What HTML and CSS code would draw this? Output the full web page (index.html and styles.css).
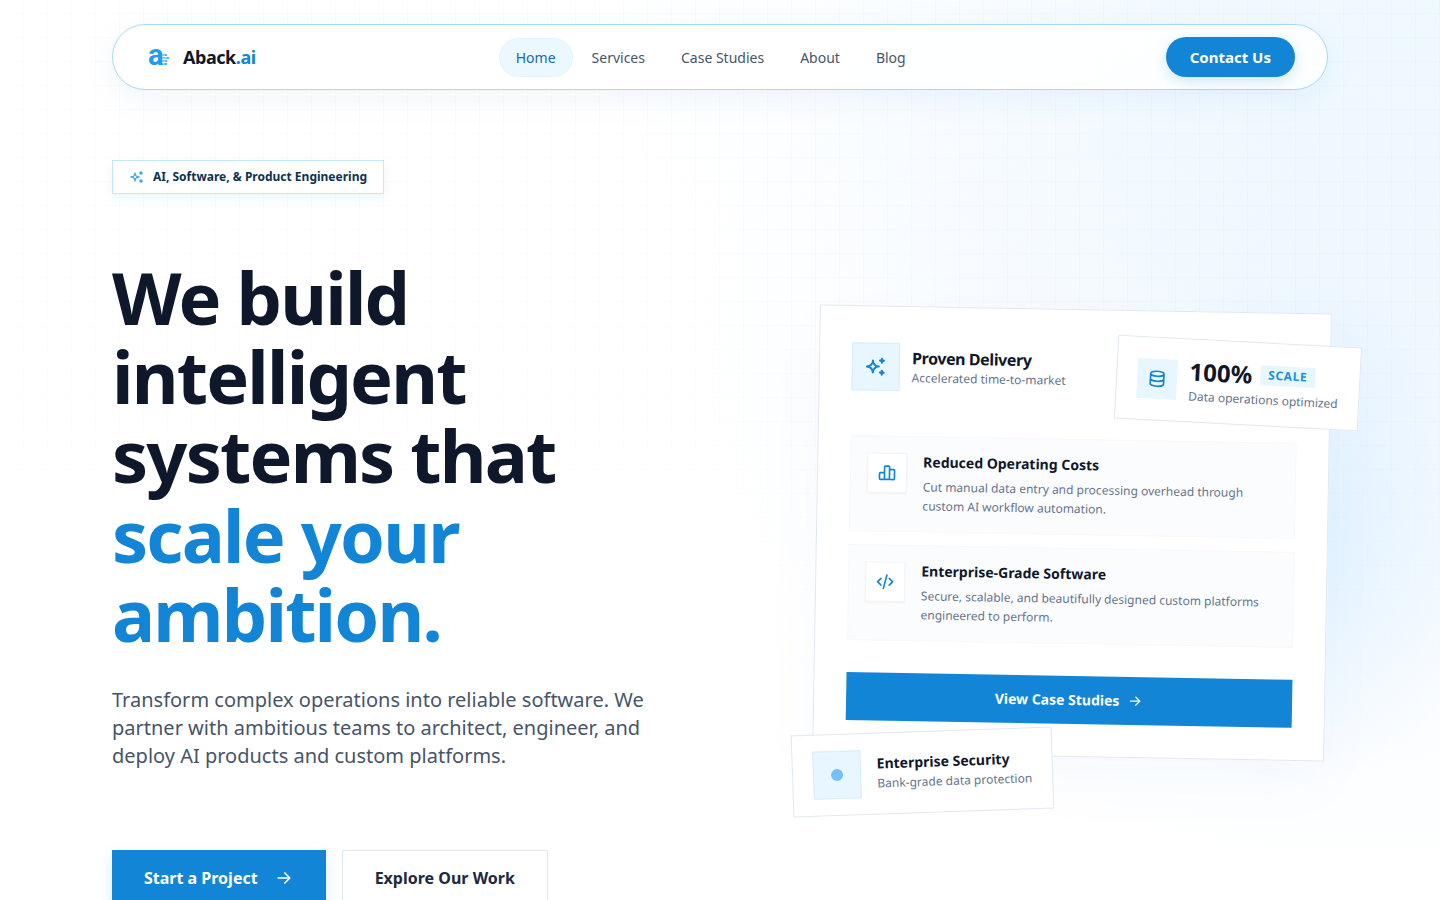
FILE: index.html
```
<!DOCTYPE html>
<html lang="en">
<head>
    <meta charset="UTF-8">
    <meta name="viewport" content="width=device-width, initial-scale=1.0">
    <title>Aback.ai</title>
    <link rel="stylesheet" href="styles.css">
</head>
<body>
    <div class="page">
        <div class="page-grid"></div>

        <header class="navbar">
            <a class="brand" href="#">
                <svg class="brand-mark" viewBox="0 0 28 28" aria-hidden="true">
                    <text x="3" y="22">a</text>
                    <path d="M16 12h4M16 15h6M16 18h4M16 21h5"/>
                    <circle cx="21" cy="12" r="1"/>
                    <circle cx="23" cy="15" r="1"/>
                    <circle cx="21" cy="18" r="1"/>
                    <circle cx="21" cy="21" r="1"/>
                </svg>
                <span class="brand-name">Aback<span class="accent">.ai</span></span>
            </a>
            <nav class="nav-links">
                <a class="nav-link active" href="#">Home</a>
                <a class="nav-link" href="#">Services</a>
                <a class="nav-link" href="#">Case Studies</a>
                <a class="nav-link" href="#">About</a>
                <a class="nav-link" href="#">Blog</a>
            </nav>
            <a class="contact" href="#">Contact Us</a>
        </header>

        <main class="hero">
            <div class="hero-text">
                <p class="eyebrow">
                    <svg class="icon icon-sm" viewBox="0 0 24 24" aria-hidden="true"><path d="M16 18a2 2 0 0 1 2 2a2 2 0 0 1 2 -2a2 2 0 0 1 -2 -2a2 2 0 0 1 -2 2zm0 -12a2 2 0 0 1 2 2a2 2 0 0 1 2 -2a2 2 0 0 1 -2 -2a2 2 0 0 1 -2 2zm-7 12a6 6 0 0 1 6 -6a6 6 0 0 1 -6 -6a6 6 0 0 1 -6 6a6 6 0 0 1 6 6z"/></svg>
                    AI, Software, &amp; Product Engineering
                </p>
                <h1>We build intelligent systems that <span class="accent">scale your ambition.</span></h1>
                <p class="lead">Transform complex operations into reliable software. We partner with ambitious teams to architect, engineer, and deploy AI products and custom platforms.</p>
                <div class="actions">
                    <a class="btn btn-primary" href="#">
                        Start a Project
                        <svg class="icon icon-md" viewBox="0 0 24 24" aria-hidden="true"><path d="M5 12h14M13 18l6 -6M13 6l6 6"/></svg>
                    </a>
                    <a class="btn btn-outline" href="#">Explore Our Work</a>
                </div>
            </div>

            <div class="hero-visual">
                <section class="card">
                    <div class="card-head">
                        <span class="tile tile-lg">
                            <svg class="icon icon-lg" viewBox="0 0 24 24" aria-hidden="true"><path d="M16 18a2 2 0 0 1 2 2a2 2 0 0 1 2 -2a2 2 0 0 1 -2 -2a2 2 0 0 1 -2 2zm0 -12a2 2 0 0 1 2 2a2 2 0 0 1 2 -2a2 2 0 0 1 -2 -2a2 2 0 0 1 -2 2zm-7 12a6 6 0 0 1 6 -6a6 6 0 0 1 -6 -6a6 6 0 0 1 -6 6a6 6 0 0 1 6 6z"/></svg>
                        </span>
                        <div>
                            <h2>Proven Delivery</h2>
                            <p class="small">Accelerated time-to-market</p>
                        </div>
                    </div>
                    <div class="features">
                        <article class="feature">
                            <span class="tile tile-white">
                                <svg class="icon icon-md" viewBox="0 0 24 24" aria-hidden="true"><path d="M3 13a1 1 0 0 1 1 -1h4a1 1 0 0 1 1 1v6a1 1 0 0 1 -1 1h-4a1 1 0 0 1 -1 -1zM15 9a1 1 0 0 1 1 -1h4a1 1 0 0 1 1 1v10a1 1 0 0 1 -1 1h-4a1 1 0 0 1 -1 -1zM9 5a1 1 0 0 1 1 -1h4a1 1 0 0 1 1 1v14a1 1 0 0 1 -1 1h-4a1 1 0 0 1 -1 -1zM4 20h14"/></svg>
                            </span>
                            <div>
                                <h3>Reduced Operating Costs</h3>
                                <p>Cut manual data entry and processing overhead through custom AI workflow automation.</p>
                            </div>
                        </article>
                        <article class="feature">
                            <span class="tile tile-white">
                                <svg class="icon icon-md" viewBox="0 0 24 24" aria-hidden="true"><path d="M7 8l-4 4l4 4M17 8l4 4l-4 4M14 4l-4 16"/></svg>
                            </span>
                            <div>
                                <h3>Enterprise-Grade Software</h3>
                                <p>Secure, scalable, and beautifully designed custom platforms engineered to perform.</p>
                            </div>
                        </article>
                    </div>
                    <a class="card-link" href="#">
                        View Case Studies
                        <svg class="icon icon-sm" viewBox="0 0 24 24" aria-hidden="true"><path d="M5 12h14M13 18l6 -6M13 6l6 6"/></svg>
                    </a>
                </section>

                <div class="float float-scale">
                    <span class="tile">
                        <svg class="icon icon-md" viewBox="0 0 24 24" aria-hidden="true"><path d="M4 6a8 3 0 1 0 16 0a8 3 0 1 0 -16 0M4 6v6a8 3 0 0 0 16 0v-6M4 12v6a8 3 0 0 0 16 0v-6"/></svg>
                    </span>
                    <div>
                        <div class="stat"><strong>100%</strong><span class="tag">SCALE</span></div>
                        <p class="small">Data operations optimized</p>
                    </div>
                </div>

                <div class="float float-security">
                    <span class="tile tile-lg"><span class="dot"></span></span>
                    <div>
                        <h3>Enterprise Security</h3>
                        <p class="small">Bank-grade data protection</p>
                    </div>
                </div>
            </div>
        </main>
    </div>
</body>
</html>
```
FILE: styles.css
```
:root {
    --blue: #1285d6;
    --ink: #0f172a;
    --muted: #64748b;
    --line: #e2e8f0;
}

* {
    box-sizing: border-box;
}

body {
    margin: 0;
    font-family: "Noto Sans", sans-serif;
    color: var(--ink);
    background-color: #fff;
}

h1, h2, h3, p {
    margin: 0;
}

a {
    color: inherit;
    text-decoration: none;
}

.accent {
    color: var(--blue);
}

/* Page background */
.page {
    position: relative;
    overflow: hidden;
    min-height: 100vh;
    padding: 24px 32px 64px;
    background:
        radial-gradient(ellipse 200px 260px at 90% 530px, rgba(190, 228, 255, 0.4), rgba(190, 228, 255, 0.2) 50%, rgba(190, 228, 255, 0) 100%),
        radial-gradient(ellipse 660px 540px at 94% 340px, rgba(219, 236, 255, 0.4), rgba(219, 236, 255, 0.2) 50%, rgba(219, 236, 255, 0) 100%),
        radial-gradient(ellipse 860px 440px at 100% 0, rgba(224, 244, 255, 0.4), rgba(224, 244, 255, 0) 100%),
        #fff;
}

.page-grid {
    position: absolute;
    inset: 0;
    background-image:
        linear-gradient(to right, rgba(14, 116, 200, 0.02) 1px, transparent 1px),
        linear-gradient(to bottom, rgba(14, 116, 200, 0.02) 1px, transparent 1px);
    background-size: 24px 24px;
    background-position: -1px 13px;
    mask-image: linear-gradient(to bottom, #000 300px, transparent 720px);
}

/* Navbar */
.navbar {
    position: relative;
    z-index: 2;
    display: flex;
    align-items: center;
    justify-content: space-between;
    max-width: 1216px;
    min-height: 66px;
    margin: 0 auto;
    padding: 12px 32px;
    background-color: rgba(255, 255, 255, 0.85);
    border: 1px solid #a5daf2;
    border-radius: 33px;
    box-shadow: 0 8px 32px rgba(14, 133, 214, 0.07);
}

.brand {
    display: flex;
    align-items: center;
    gap: 10px;
}

.brand-mark {
    width: 28px;
    height: 28px;
    overflow: visible;
    fill: #1b9cf0;
    stroke: none;
}

.brand-mark text {
    font-family: Roboto, sans-serif;
    font-size: 29px;
    font-weight: 700;
}

.brand-mark path {
    stroke: #1b9cf0;
    stroke-width: 1;
}

.brand-name {
    font-size: 18px;
    line-height: 28px;
    font-weight: 700;
    letter-spacing: -0.025em;
}

.nav-links {
    display: flex;
    gap: 2px;
}

.nav-link {
    padding: 8px 16px;
    border: 1px solid transparent;
    border-radius: 20px;
    font-size: 14px;
    line-height: 21px;
    color: #475569;
}

.nav-link.active {
    background-color: #ecf8ff;
    border-color: #e2f3fd;
    color: #1a69a8;
}

.contact {
    padding: 9px 24px;
    border-radius: 20px;
    background-color: var(--blue);
    color: #fff;
    font-size: 15px;
    line-height: 22px;
    font-weight: 700;
    box-shadow: 0 4px 14px rgba(18, 133, 214, 0.2);
}

/* Hero */
.hero {
    position: relative;
    display: grid;
    grid-template-columns: 1fr 1fr;
    gap: 64px;
    align-items: center;
    max-width: 1216px;
    margin: 70px auto 0;
}

.eyebrow {
    display: inline-flex;
    align-items: center;
    gap: 8px;
    padding: 8px 16px;
    border: 1px solid #c3e6f8;
    background-color: #fff;
    font-size: 12px;
    line-height: 16px;
    font-weight: 700;
    color: #0c3350;
    box-shadow: 0 4px 12px rgba(14, 133, 214, 0.07);
}

.eyebrow .icon {
    stroke: #3aa3ea;
}

h1 {
    margin-top: 64px;
    font-size: 72px;
    line-height: 1.1;
    font-weight: 700;
    letter-spacing: -0.025em;
}

.lead {
    margin-top: 32px;
    max-width: 576px;
    font-size: 20px;
    line-height: 28px;
    color: #475569;
}

.actions {
    display: flex;
    gap: 16px;
    margin-top: 80px;
}

.btn {
    display: flex;
    align-items: center;
    gap: 16px;
    min-height: 56px;
    padding: 0 32px;
    font-size: 16px;
    line-height: 24px;
    font-weight: 700;
}

.btn-primary {
    background-color: var(--blue);
    color: #fff;
    box-shadow: 0 8px 16px rgba(18, 133, 214, 0.15);
}

.btn-outline {
    border: 1px solid var(--line);
    background-color: #fff;
    color: #1e293b;
}

/* Icons and tiles */
.icon {
    flex: none;
    fill: none;
    stroke: currentColor;
    stroke-width: 2;
    stroke-linecap: round;
    stroke-linejoin: round;
}

.icon-sm {
    width: 16px;
    height: 16px;
}

.icon-md {
    width: 20px;
    height: 20px;
}

.icon-lg {
    width: 24px;
    height: 24px;
}

.tile {
    display: flex;
    flex: none;
    align-items: center;
    justify-content: center;
    width: 40px;
    height: 40px;
    background-color: #e8f6ff;
    color: var(--blue);
}

.tile-lg {
    width: 48px;
    height: 48px;
    border: 1px solid #d5edfb;
}

.tile-white {
    background-color: #fff;
    border: 1px solid #f1f5f9;
    box-shadow: 0 1px 2px rgba(15, 23, 42, 0.05);
}

.dot {
    width: 12px;
    height: 12px;
    border-radius: 50%;
    background-color: #74c0fb;
}

/* Tilted card */
.hero-visual {
    position: relative;
    justify-self: end;
    width: 100%;
    max-width: 512px;
}

.card {
    padding: 32px;
    border: 1px solid var(--line);
    background-color: #fff;
    transform: rotate(1deg);
    box-shadow: 0 24px 64px rgba(14, 133, 214, 0.03);
}

.card-head {
    display: flex;
    align-items: center;
    gap: 12px;
    min-height: 55px;
    margin-bottom: 42px;
}

h2 {
    font-size: 16px;
    line-height: 22px;
    font-weight: 700;
    letter-spacing: -0.025em;
}

h3 {
    font-size: 14px;
    line-height: 18px;
    font-weight: 700;
}

.small {
    font-size: 12px;
    line-height: 18px;
    color: var(--muted);
}

.features {
    display: grid;
    gap: 13px;
}

.feature {
    display: flex;
    gap: 16px;
    padding: 16px;
    border: 1px solid #f6f8fc;
    background-color: #fbfcfe;
}

.feature p {
    margin-top: 6px;
    font-size: 12px;
    line-height: 19px;
    color: var(--muted);
}

.card-link {
    display: flex;
    align-items: center;
    justify-content: center;
    gap: 8px;
    min-height: 48px;
    margin-top: 32px;
    background-color: var(--blue);
    color: #fff;
    font-size: 14px;
    line-height: 20px;
    font-weight: 700;
}

/* Floating badges */
.float {
    position: absolute;
    display: flex;
    align-items: center;
    padding: 16px 20px;
    border: 1px solid var(--line);
    background-color: #fff;
    white-space: nowrap;
}

.float h3 {
    margin-bottom: 2px;
}

.float-scale {
    top: 32px;
    right: -32px;
    gap: 12px;
    transform: rotate(3deg);
}

.float-security {
    bottom: -56px;
    left: -24px;
    gap: 16px;
    transform: rotate(-2deg);
}

.stat {
    display: flex;
    align-items: center;
    gap: 8px;
}

.stat strong {
    font-size: 24px;
    line-height: 32px;
    font-weight: 700;
}

.tag {
    padding: 2px 8px;
    background-color: #e8f6ff;
    color: #1b8fe0;
    font-size: 12px;
    line-height: 16px;
    font-weight: 700;
    letter-spacing: 0.05em;
}
```
